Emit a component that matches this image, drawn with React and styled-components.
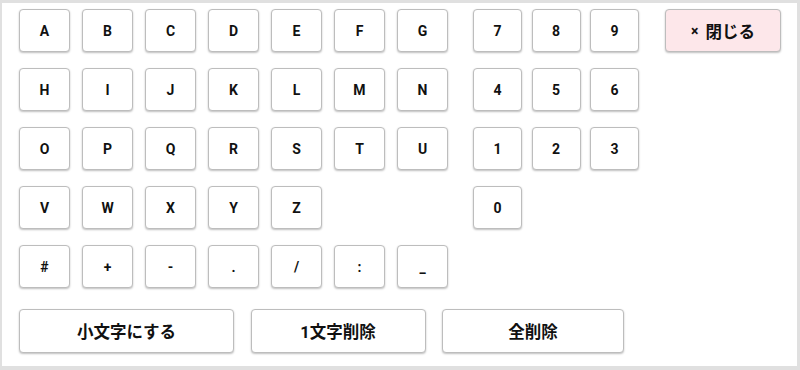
import React from "react";
import styled, { createGlobalStyle } from "styled-components";

const GlobalStyle = createGlobalStyle`
  html, body {
    margin: 0;
    padding: 0;
    background: #fff;
  }
  body {
    font-family: Roboto, "Noto Sans CJK JP", "Noto Sans", sans-serif;
  }
`;

const Frame = styled.div`
  width: 800px;
  height: 370px;
  box-sizing: border-box;
  border: 3px solid #e0e0e0;
  border-left-width: 2px;
  border-bottom-width: 4px;
  padding: 6px 16px 0 17px;
  background: #fff;
`;

const TopArea = styled.div`
  display: flex;
  align-items: flex-start;
`;

const LetterGrid = styled.div`
  display: grid;
  grid-template-columns: repeat(7, 51px);
  grid-auto-rows: 43px;
  column-gap: 12px;
  row-gap: 16px;
`;

const NumberGrid = styled.div`
  display: grid;
  grid-template-columns: repeat(3, 49px);
  grid-auto-rows: 43px;
  column-gap: 9.5px;
  row-gap: 16px;
  margin-left: 25px;
`;

const Key = styled.button`
  box-sizing: border-box;
  display: flex;
  align-items: center;
  justify-content: center;
  padding: 0;
  background: ${props => (props.$pink ? "#fde7ea" : "#fff")};
  border: 1px solid #bdbdbd;
  border-radius: 4px;
  box-shadow: 0 1px 2px rgba(0, 0, 0, 0.25);
  font-family: Roboto, "Noto Sans CJK JP", sans-serif;
  font-weight: 700;
  font-size: 14px;
  color: #111;
  cursor: pointer;
`;

const CloseKey = styled(Key)`
  width: 118px;
  height: 43px;
  margin-left: 26px;
  font-size: 16.5px;
  gap: 7px;
`;

const Times = styled.span`
  font-size: 14px;
`;

const BottomRow = styled.div`
  display: flex;
  gap: 16.5px;
  margin-top: 21px;
`;

const WideKey = styled(Key)`
  width: ${props => props.$w}px;
  height: 44px;
  font-size: 16.5px;
`;

const letters = [
  "A", "B", "C", "D", "E", "F", "G",
  "H", "I", "J", "K", "L", "M", "N",
  "O", "P", "Q", "R", "S", "T", "U",
  "V", "W", "X", "Y", "Z", null, null,
  "#", "+", "-", ".", "/", ":", "_"
];

const numbers = ["7", "8", "9", "4", "5", "6", "1", "2", "3", "0"];

const App = () => (
  <>
    <GlobalStyle />
    <Frame>
      <TopArea>
        <LetterGrid>
          {letters.map((l, i) =>
            l ? <Key key={i}>{l}</Key> : <span key={i} />
          )}
        </LetterGrid>
        <NumberGrid>
          {numbers.map(n => (
            <Key key={n}>{n}</Key>
          ))}
        </NumberGrid>
        <CloseKey $pink>
          <Times>×</Times>
          <span>閉じる</span>
        </CloseKey>
      </TopArea>
      <BottomRow>
        <WideKey $w={215}>小文字にする</WideKey>
        <WideKey $w={175}>1文字削除</WideKey>
        <WideKey $w={182}>全削除</WideKey>
      </BottomRow>
    </Frame>
  </>
);

export default App;
